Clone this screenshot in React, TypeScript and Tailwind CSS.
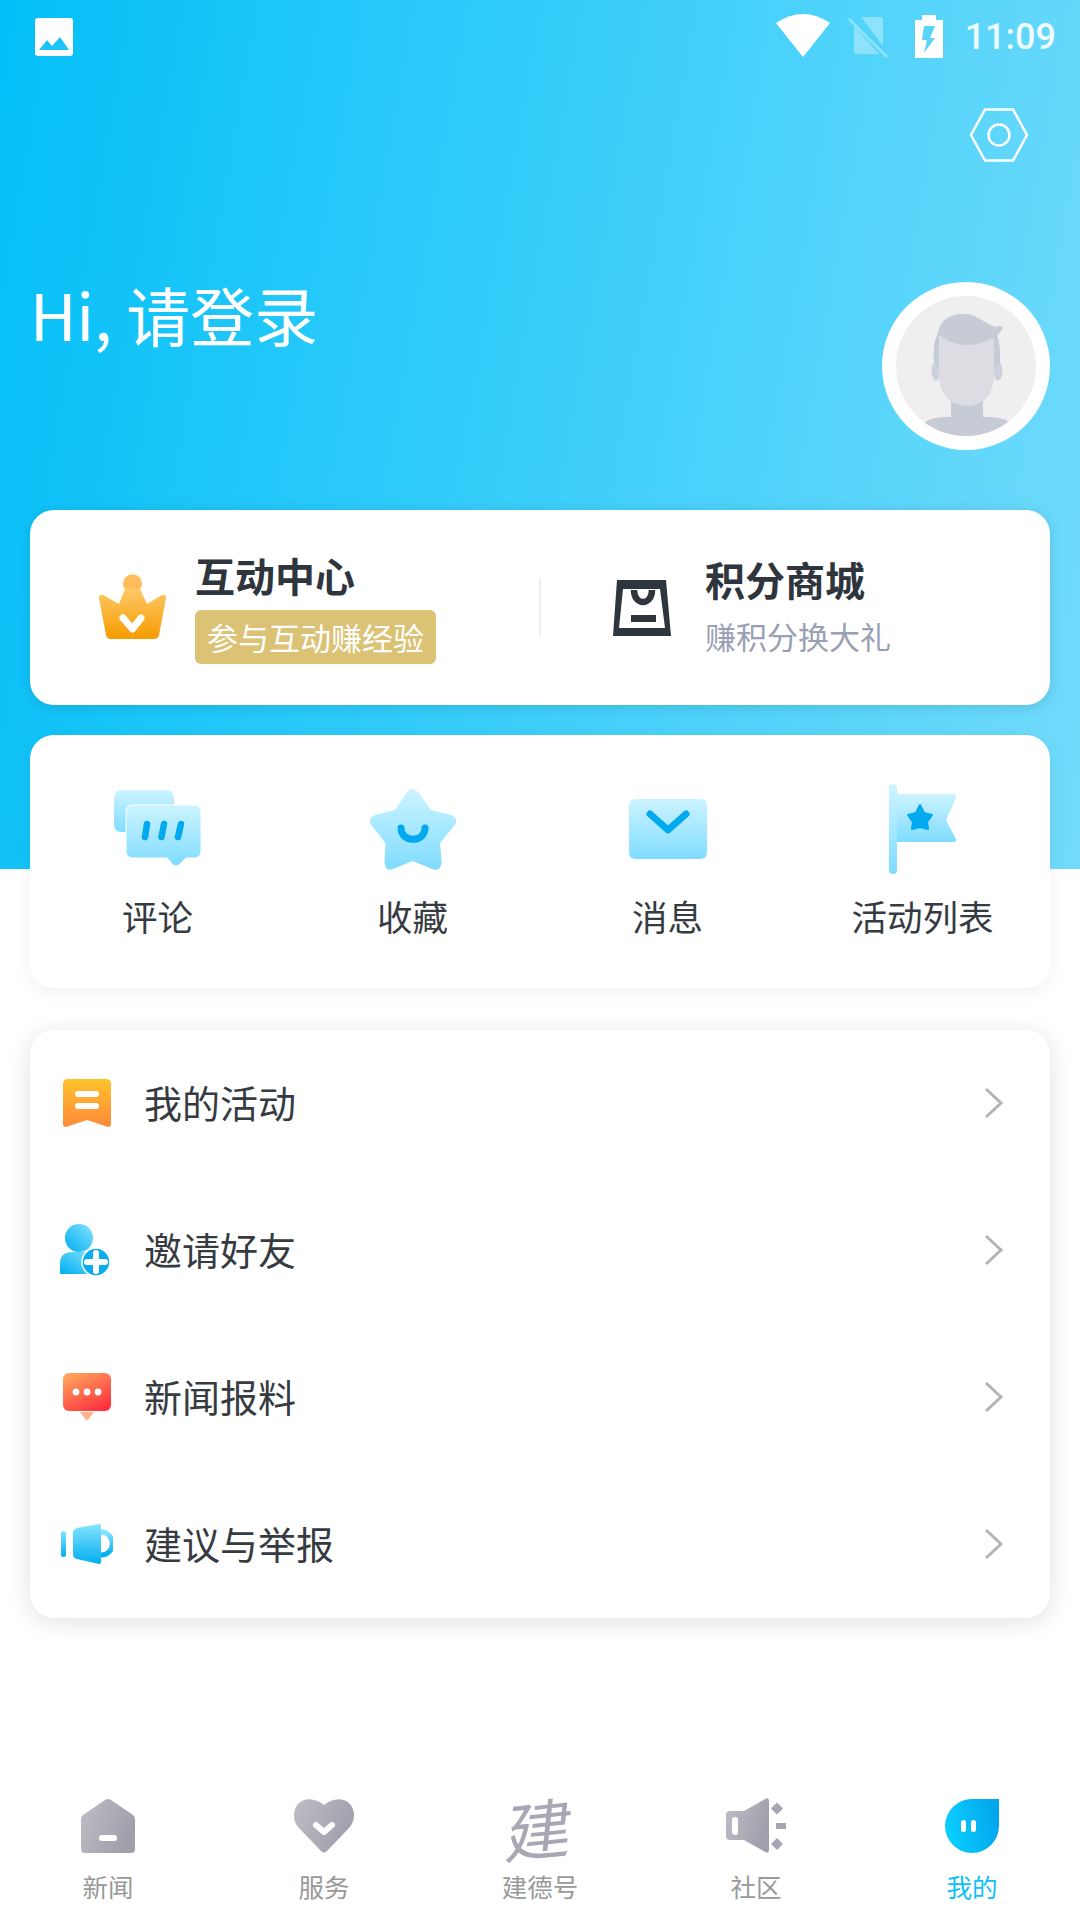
import type { ReactNode } from "react";

const font = "font-['Noto_Sans_CJK_SC','Noto_Sans',sans-serif]";

const BlueGrad = ({ id }: { id: string }) => (
  <linearGradient id={id} x1="0" y1="0" x2="0" y2="1">
    <stop offset="0" stopColor="#cdf4ff" />
    <stop offset="1" stopColor="#7fdcff" />
  </linearGradient>
);

const GreyGrad = ({ id }: { id: string }) => (
  <linearGradient id={id} x1="0" y1="0" x2="1" y2="0.4">
    <stop offset="0" stopColor="#bebec8" />
    <stop offset="1" stopColor="#a0a0ac" />
  </linearGradient>
);

const StatusBar = () => (
  <div className="flex h-[74px] items-center pl-[34px] pr-[24px]">
    <svg width="40" height="40" viewBox="0 0 40 40">
      <rect x="1" y="1" width="38" height="38" rx="3" fill="#fff" />
      <path d="M5 33 L13 23 L18 29 L26 20 L35 33 Z" fill="#1cc4f8" />
    </svg>
    <div className="ml-auto flex items-center">
      <svg width="54" height="44" viewBox="0 0 54 44" className="mt-[-2px]">
        <path d="M0 9 Q27 -9 54 9 L27 43 Z" fill="#fff" />
      </svg>
      <svg width="40" height="44" viewBox="0 0 40 44" className="ml-[18px] opacity-35">
        <path d="M13 2 H32 Q35 2 35 5 V31 Z M6 11 L31 39 H9 Q6 39 6 36 Z" fill="#fff" />
        <path d="M1 4 L39 42" stroke="#fff" strokeWidth="3" />
      </svg>
      <svg width="28" height="44" viewBox="0 0 28 44" className="ml-[27px]">
        <path
          fillRule="evenodd"
          d="M7 0 H21 V5 H28 V43 H0 V5 H7 Z M9 11 L7 25 H12 L9 38 L20 23 H15 L20 11 Z"
          fill="#fff"
        />
      </svg>
      <span className="ml-[22px] font-['Roboto',sans-serif] text-[36px] leading-none font-medium text-white opacity-90">
        11:09
      </span>
    </div>
  </div>
);

const Avatar = () => (
  <div className="flex h-[168px] w-[168px] items-center justify-center rounded-full bg-white">
    <svg width="140" height="140" viewBox="0 0 140 140" className="rounded-full bg-[#efefef]">
      <path d="M29 126 Q37 121 50 121 H92 Q104 121 112 125 L112 140 H29 Z" fill="#c7cbd6" />
      <rect x="55" y="100" width="32" height="24" fill="#c7cbd6" />
      <ellipse cx="40" cy="75" rx="4.5" ry="9.5" fill="#ccd1dd" />
      <ellipse cx="102" cy="75" rx="4.5" ry="9.5" fill="#ccd1dd" />
      <path d="M42 37 Q36 48 38 67 L44 72 H98 L104 67 Q105 48 100 36 Z" fill="#c7cbd6" />
      <path d="M43 40 H98 V78 Q98 108 71 110 Q43 108 43 78 Z" fill="#dcdde3" />
      <path
        d="M42 37 C44 22 58 17 70 18 C82 19 92 30 101 31 L103 29 L107 32 L103 38 C96 44 84 49 71 49 C58 49 48 44 42 37 Z"
        fill="#c7cbd6"
      />
    </svg>
  </div>
);

const Crown = () => (
  <svg width="68" height="68" viewBox="0 0 68 68">
    <defs>
      <linearGradient id="crown" x1="0" y1="0" x2="0" y2="1">
        <stop offset="0" stopColor="#ffc866" />
        <stop offset="1" stopColor="#f59c00" />
      </linearGradient>
    </defs>
    <circle cx="34.5" cy="9.7" r="9.5" fill="#ffbd5c" />
    <path
      d="M27 15 H42 L49 30 L64 21 Q68 20 68 24 L61 61 Q60 65 56 65 H13 Q9 65 8 61 L1 24 Q1 20 5 21 L21 30 Z"
      fill="url(#crown)"
    />
    <path d="M25 44 L34.5 55 L43 44" fill="none" stroke="#fff" strokeWidth="7" strokeLinecap="round" strokeLinejoin="round" />
  </svg>
);

const Bag = () => (
  <svg width="60" height="56" viewBox="0 0 60 56">
    <path fillRule="evenodd" d="M5 0 H54 L59 56 H1 Z M11 9 L7 48 H53 L48 9 Z" fill="#2e353d" />
    <path d="M22 10 C22 26 40 26 40 10" fill="none" stroke="#2e353d" strokeWidth="6.5" />
    <rect x="19" y="35" width="25" height="7" fill="#2e353d" />
  </svg>
);

const CommentIcon = () => (
  <svg width="88" height="78" viewBox="0 0 88 78">
    <defs>
      <BlueGrad id="c1" />
    </defs>
    <rect x="0" y="0" width="60" height="42" rx="7" fill="url(#c1)" />
    <path
      d="M19 15 H80 Q87 15 87 22 V61 Q87 68 80 68 H72 L65 75 Q62 77 59 75 L53 68 H19 Q12 68 12 61 V22 Q12 15 19 15 Z"
      fill="url(#c1)"
      stroke="#fff"
      strokeWidth="1"
    />
    <path d="M33 34 L31 47 M50 34 L47.5 47 M67 34 L64 47" stroke="#03a9ee" strokeWidth="6.5" strokeLinecap="round" />
  </svg>
);

const StarIcon = () => (
  <svg width="86" height="82" viewBox="0 0 86 82">
    <defs>
      <BlueGrad id="c2" />
    </defs>
    <path
      d="M37 4 Q42.7 -2 48 4 L61 22 L81 27 Q90 31 84 38 L70 55 L71.7 74 Q71 84 62 81 L42.7 73 L23 81 Q15 84 14.5 74 L15.5 55 L2 38 Q-4 31 5 27 L25 22 Z"
      fill="url(#c2)"
    />
    <path d="M31 40 C31 55 55 55 55 40" fill="none" stroke="#03a9ee" strokeWidth="7" strokeLinecap="round" />
  </svg>
);

const MailIcon = () => (
  <svg width="78" height="60" viewBox="0 0 78 60">
    <defs>
      <BlueGrad id="c3" />
    </defs>
    <rect width="78" height="60" rx="6" fill="url(#c3)" />
    <path d="M21 15 L39 31 L57 15" fill="none" stroke="#03a9ee" strokeWidth="7" strokeLinecap="round" strokeLinejoin="round" />
  </svg>
);

const FlagIcon = () => (
  <svg width="68" height="90" viewBox="0 0 68 90">
    <defs>
      <BlueGrad id="c4" />
    </defs>
    <rect x="0" y="0" width="8" height="90" rx="4" fill="url(#c4)" />
    <path d="M8 10 H64 Q68 10 67 14 L57 36 L67 55 Q68 58 64 58 H8 Z" fill="url(#c4)" />
    <path
      d="M31 21 L35 29 L43 31 L38 38 L39 45 L31 43 L23 45 L24 38 L19 31 L27 29 Z"
      fill="#03a9ee"
      stroke="#03a9ee"
      strokeWidth="2"
      strokeLinejoin="round"
    />
  </svg>
);

const BookmarkIcon = () => (
  <svg width="48" height="48" viewBox="0 0 48 48">
    <defs>
      <linearGradient id="l1" x1="0" y1="0" x2="0" y2="1">
        <stop offset="0" stopColor="#ffc22a" />
        <stop offset="1" stopColor="#ff8a3c" />
      </linearGradient>
    </defs>
    <path d="M5 0 H43 Q48 0 48 5 V45 Q48 48 45 48 L24 41 L3 48 Q0 48 0 45 V5 Q0 0 5 0 Z" fill="url(#l1)" />
    <rect x="12" y="12" width="24" height="6" rx="3" fill="#fff" />
    <rect x="12" y="24" width="24" height="6" rx="3" fill="#fff" />
  </svg>
);

const InviteIcon = () => (
  <svg width="50" height="52" viewBox="0 0 50 52" className="ml-[-4px]">
    <defs>
      <linearGradient id="l2" x1="0" y1="1" x2="1" y2="0">
        <stop offset="0" stopColor="#00aef0" />
        <stop offset="1" stopColor="#85e4ff" />
      </linearGradient>
    </defs>
    <circle cx="19" cy="14" r="14" fill="url(#l2)" />
    <path d="M0 50 V40 Q0 28 12 28 H28 Q36 28 38 34 V50 Z" fill="url(#l2)" />
    <circle cx="36" cy="38" r="14" fill="#08aef0" stroke="#fff" strokeWidth="1.5" />
    <path d="M27 38 H45 M36 29 V47" stroke="#fff" strokeWidth="6" strokeLinecap="round" />
  </svg>
);

const ChatIcon = () => (
  <svg width="48" height="48" viewBox="0 0 48 48">
    <defs>
      <linearGradient id="l3" x1="0.2" y1="0" x2="0.8" y2="1">
        <stop offset="0" stopColor="#ffa45c" />
        <stop offset="1" stopColor="#ff2d3d" />
      </linearGradient>
    </defs>
    <path d="M17 39 H31 L25 47 Q24 48 23 47 Z" fill="#ffb48c" />
    <rect width="48" height="38" rx="6" fill="url(#l3)" />
    <circle cx="13" cy="19" r="3.4" fill="#fff" />
    <circle cx="24" cy="19" r="3.4" fill="#fff" />
    <circle cx="35" cy="19" r="3.4" fill="#fff" />
  </svg>
);

const MegaphoneIcon = () => (
  <svg width="52" height="42" viewBox="0 0 52 42">
    <defs>
      <linearGradient id="l4" x1="0" y1="0" x2="0" y2="1">
        <stop offset="0" stopColor="#85e4ff" />
        <stop offset="1" stopColor="#00aef0" />
      </linearGradient>
    </defs>
    <rect x="0" y="8" width="5" height="26" rx="2.5" fill="url(#l4)" />
    <path d="M16 5 L38 1 Q40 1 40 3 V39 Q40 41 38 41 L16 36 Q12 35 12 31 V10 Q12 6 16 5 Z" fill="url(#l4)" />
    <path d="M40 9 C55 9 55 32 40 32" fill="none" stroke="url(#l4)" strokeWidth="5" />
  </svg>
);

const HomeIcon = () => (
  <svg width="54" height="54" viewBox="0 0 54 54">
    <defs>
      <GreyGrad id="t1" />
    </defs>
    <path d="M24 1 Q27 -1 30 1 L52 16 Q54 17.5 54 20 V50 Q54 54 50 54 H4 Q0 54 0 50 V20 Q0 17.5 2 16 Z" fill="url(#t1)" />
    <rect x="18" y="36" width="18" height="6" rx="3" fill="#fff" />
  </svg>
);

const HeartIcon = () => (
  <svg width="60" height="54" viewBox="0 0 60 54">
    <defs>
      <GreyGrad id="t2" />
    </defs>
    <path
      d="M30 6 C38 -1 50 -2 56 5 C62 12 61 23 55 29 L33 52 Q30 55 27 52 L5 29 C-1 23 -2 12 4 5 C10 -2 22 -1 30 6 Z"
      fill="url(#t2)"
    />
    <path d="M22 26 L30 33 L38 26" fill="none" stroke="#fff" strokeWidth="6" strokeLinecap="round" strokeLinejoin="round" />
  </svg>
);

const SpeakerIcon = () => (
  <svg width="60" height="56" viewBox="0 0 60 56">
    <defs>
      <GreyGrad id="t3" />
    </defs>
    <path
      d="M4 13 H18 L40 0.5 Q43 -0.5 43 3 V52 Q43 55.5 40 54.5 L18 42 H4 Q0 42 0 38 V17 Q0 13 4 13 Z"
      fill="url(#t3)"
    />
    <rect x="6" y="19" width="6" height="18" rx="3" fill="#fff" />
    <path d="M51 4.5 L57 10.5 L51 16.5 L45 10.5 Z M50 25 H60 V31 H50 Z M51 40 L57 46 L51 52 L45 46 Z" fill="#a6a6b2" />
  </svg>
);

const MineIcon = () => (
  <svg width="54" height="54" viewBox="0 0 54 54">
    <defs>
      <linearGradient id="t4" x1="0" y1="0.6" x2="1" y2="0.4">
        <stop offset="0" stopColor="#0bd0ff" />
        <stop offset="1" stopColor="#02a5ec" />
      </linearGradient>
    </defs>
    <path d="M27 0 H54 V27 A27 27 0 1 1 27 0 Z" fill="url(#t4)" />
    <rect x="16" y="21" width="5" height="12" rx="2.5" fill="#fff" />
    <rect x="26" y="21" width="5" height="12" rx="2.5" fill="#fff" />
  </svg>
);

const Chevron = () => (
  <svg width="20" height="32" viewBox="0 0 20 32" className="ml-auto">
    <path d="M2 2 L17 16 L2 30" fill="none" stroke="#b4b4b4" strokeWidth="3" />
  </svg>
);

const quick: { label: string; icon: ReactNode }[] = [
  { label: "评论", icon: <CommentIcon /> },
  { label: "收藏", icon: <StarIcon /> },
  { label: "消息", icon: <MailIcon /> },
  { label: "活动列表", icon: <FlagIcon /> },
];

const rows: { label: string; icon: ReactNode }[] = [
  { label: "我的活动", icon: <BookmarkIcon /> },
  { label: "邀请好友", icon: <InviteIcon /> },
  { label: "新闻报料", icon: <ChatIcon /> },
  { label: "建议与举报", icon: <MegaphoneIcon /> },
];

const tabs: { label: string; icon: ReactNode; active?: boolean }[] = [
  { label: "新闻", icon: <HomeIcon /> },
  { label: "服务", icon: <HeartIcon /> },
  {
    label: "建德号",
    icon: (
      <span className="inline-block -skew-x-6 -skew-y-6 text-[66px] leading-none font-normal text-[#a8a8b4]">建</span>
    ),
  },
  { label: "社区", icon: <SpeakerIcon /> },
  { label: "我的", icon: <MineIcon />, active: true },
];

export default function App() {
  return (
    <div className={`flex h-[1920px] w-[1080px] flex-col overflow-hidden bg-white ${font}`}>
      <div className="h-[869px] shrink-0 bg-[linear-gradient(100deg,#03bff7_0%,#2fcbfa_40%,#72dbfb_100%)]">
        <StatusBar />
        <div className="flex justify-end pt-[34px] pr-[52px]">
          <svg width="58" height="54" viewBox="0 0 58 54">
            <path d="M15 1.5 H43 L57 27 L43 52.5 H15 L1 27 Z" fill="none" stroke="#fff" strokeWidth="2.5" />
            <circle cx="29" cy="27" r="10.5" fill="none" stroke="#fff" strokeWidth="2.5" />
          </svg>
        </div>
        <div className="flex items-start justify-between pt-[120px] pr-[30px] pl-[30px]">
          <div className="mt-[-9px] text-[64px] leading-[80px] font-normal text-white">Hi, 请登录</div>
          <Avatar />
        </div>
      </div>

      <div className="mx-[30px] mt-[-359px] flex h-[195px] shrink-0 items-center rounded-[24px] bg-white shadow-[0_2px_14px_rgba(0,0,0,0.12)]">
        <div className="flex w-[509px] items-center pl-[68px]">
          <Crown />
          <div className="mt-[-2px] ml-[29px] flex flex-col items-start">
            <div className="text-[40px] leading-[50px] font-bold text-[#2e353d]">互动中心</div>
            <div className="mt-[10px] rounded-[6px] bg-[#dcc274] px-[12px] text-[31px] leading-[54px] text-white">
              参与互动赚经验
            </div>
          </div>
        </div>
        <div className="h-[57px] w-[2px] bg-[#eeeeee]" />
        <div className="flex items-center pl-[71px]">
          <Bag />
          <div className="ml-[33px] flex flex-col">
            <div className="mt-[-2px] text-[40px] leading-[50px] font-bold text-[#2e353d]">积分商城</div>
            <div className="mt-[9px] text-[31px] leading-[46px] text-[#9aa0b4]">赚积分换大礼</div>
          </div>
        </div>
      </div>

      <div className="mx-[30px] mt-[30px] grid h-[253px] shrink-0 grid-cols-4 rounded-[24px] bg-white pt-[48px] shadow-[0_4px_20px_rgba(0,0,0,0.06)]">
        {quick.map((q) => (
          <div key={q.label} className="flex flex-col items-center">
            <div className="flex h-[92px] items-center justify-center">{q.icon}</div>
            <div className="mt-[17px] text-[35.5px] leading-[48px] text-[#363b42]">{q.label}</div>
          </div>
        ))}
      </div>

      <div className="mx-[30px] mt-[42px] shrink-0 rounded-[24px] bg-white shadow-[0_4px_24px_rgba(0,0,0,0.12)]">
        {rows.map((r) => (
          <div key={r.label} className="flex h-[147px] items-center pr-[46px] pb-[2px]">
            <div className="flex w-[114px] justify-center pr-[1px]">{r.icon}</div>
            <span className="mb-[2px] text-[38px] text-[#363b42]">{r.label}</span>
            <Chevron />
          </div>
        ))}
      </div>

      <div className="mt-auto grid h-[140px] shrink-0 grid-cols-5 pt-[10px]">
        {tabs.map((t) => (
          <div key={t.label} className="flex flex-col items-center">
            <div className="flex h-[72px] items-center justify-center">{t.icon}</div>
            <div className={`mt-[6px] text-[25.5px] leading-[36px] ${t.active ? "text-[#0ec0f8]" : "text-[#999999]"}`}>
              {t.label}
            </div>
          </div>
        ))}
      </div>
    </div>
  );
}
